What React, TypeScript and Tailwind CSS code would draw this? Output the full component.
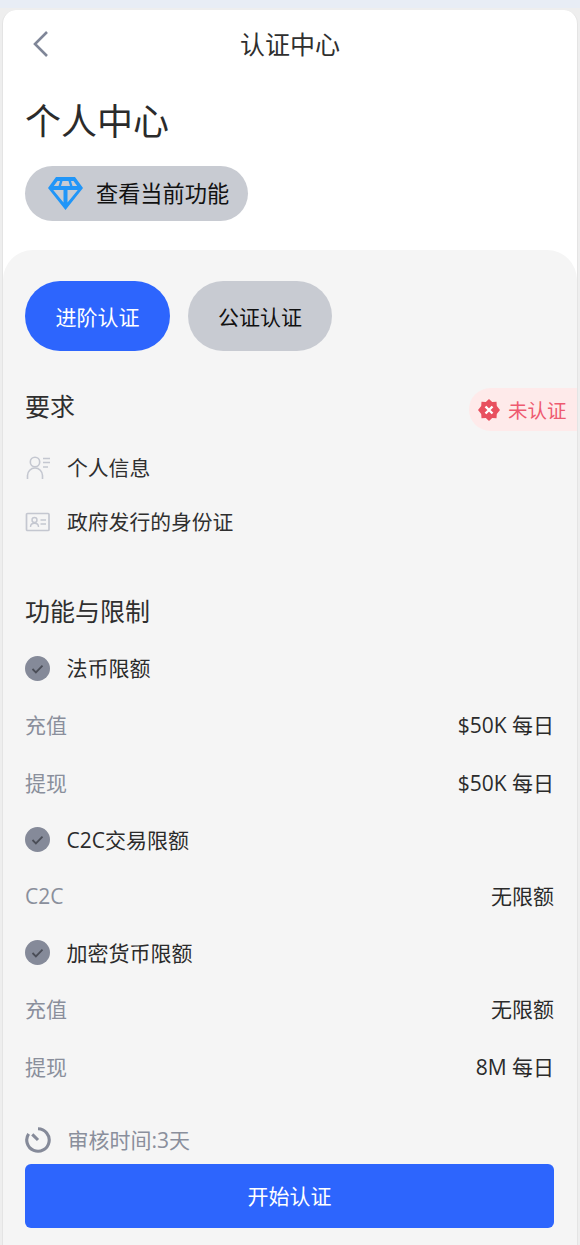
import React from "react";

const Row = ({ label, value }: { label: string; value: string }) => (
  <div className="flex h-[58px] items-center justify-between text-[21px]">
    <span className="pt-[2px] text-[#8a8f9c]">{label}</span>
    <span className="pt-[2px] text-[#2b2b2b]">{value}</span>
  </div>
);

const Check = () => (
  <svg width="25" height="25" viewBox="0 0 25 25" className="shrink-0">
    <circle cx="12.5" cy="12.5" r="12.5" fill="#858a99" />
    <path d="M7.5 13l3.4 3.4 6.6-6.8" fill="none" stroke="#4a4d57" strokeWidth="1.8" />
  </svg>
);

const CheckHead = ({ label, tight }: { label: string; tight?: boolean }) => (
  <div className={`flex items-center gap-[16.5px] text-[21px] text-[#2b2b2b] ${tight ? "h-[55px]" : "h-[56px]"}`}>
    <Check />
    <span className="pt-[2px]">{label}</span>
  </div>
);

export default function App() {
  return (
    <div
      className="h-[1245px] w-[580px] overflow-hidden bg-[#e8edf5] pt-[8px]"
      style={{ fontFamily: '"Open Sans", "Noto Sans CJK SC", sans-serif' }}
    >
      <div className="flex h-[1237px] flex-col bg-[#eeeeee] pl-[2px] pr-[2px] pt-[2px]">
        <div className="flex flex-1 flex-col rounded-t-[14px] border-x border-[#e4e4e4] bg-white">
          <div className="relative flex h-[68px] items-center justify-center pt-[1px] text-[25px] text-[#2f2f2f]">
            <svg width="18" height="28" viewBox="0 0 18 28" className="absolute left-[28px] top-[20px]">
              <path d="M16 2L4 14l12 12" fill="none" stroke="#7f8698" strokeWidth="2.6" />
            </svg>
            认证中心
          </div>
          <div className="px-[22px]">
            <h1 className="mt-[14px] h-[60px] text-[36px] font-normal leading-[60px] text-[#2b2b2b]">个人中心</h1>
            <div className="mt-[14px] flex h-[55px] w-[223px] items-center gap-[13px] rounded-full bg-[#c8cbd2] pl-[23px] text-[22.2px] text-[#111111]">
              <svg width="35" height="33" viewBox="0 0 35 33" className="shrink-0">
                <path
                  fillRule="evenodd"
                  d="M8 0H27L35 11L17.5 33L0 11ZM9.5 4H12L10.5 9H5.8ZM14.5 4H20.5L22 9H13ZM23 4H25.5L29.2 9H24.5ZM5.2 13H15.5V25.5ZM19.5 13H29.8L19.5 25.5Z"
                  fill="#2196f8"
                />
              </svg>
              <span>查看当前功能</span>
            </div>
          </div>
          <div className="mt-[29px] flex flex-1 flex-col rounded-t-[30px] bg-[#f5f5f5] pl-[22px] pr-[23px]">
            <div className="mt-[31px] flex gap-[18px] text-[21px]">
              <div className="flex h-[70px] w-[145px] items-center justify-center rounded-full bg-[#2d65fd] pt-[3px] text-white">进阶认证</div>
              <div className="flex h-[70px] w-[144px] items-center justify-center rounded-full bg-[#c8cbd2] pt-[3px] text-[#111111]">公证认证</div>
            </div>
            <div className="mt-[37px] -mr-[23px] flex h-[43px] items-center justify-between">
              <span className="-mt-[5px] text-[25px] text-[#2f2f2f]">要求</span>
              <div className="flex h-[43px] w-[108px] items-center gap-[8px] rounded-l-full bg-[#feeaea] pl-[9px] text-[19.5px] text-[#ee5a70]">
                <svg width="22" height="22" viewBox="0 0 22 22" className="shrink-0">
                  <path d="M11 0l3.2 3 4.3-.3.3 4.3L22 11l-3.2 4-.3 4.3-4.3-.3-3.2 3-3.2-3-4.3.3-.3-4.3L0 11l3.2-4 .3-4.3 4.3.3z" fill="#e8505f" />
                  <path d="M7.5 7.5l7 7M14.5 7.5l-7 7" stroke="#ffffff" strokeWidth="2.4" />
                </svg>
                <span className="pt-[2px]">未认证</span>
              </div>
            </div>
            <div className="mt-[10px] flex h-[54px] items-center gap-[16px] text-[20.8px] text-[#2f2f2f]">
              <svg width="26" height="26" viewBox="0 0 26 26" className="shrink-0">
                <circle cx="10" cy="7" r="4.7" fill="none" stroke="#c4c7d0" strokeWidth="1.6" />
                <path d="M2.5 24v-3.5a7.5 7.5 0 0115 0V24" fill="none" stroke="#c4c7d0" strokeWidth="1.6" />
                <path d="M18 3.5h7M18 7.5h7M18 12h5" stroke="#c4c7d0" strokeWidth="1.6" />
              </svg>
              <span className="pt-[2px]">个人信息</span>
            </div>
            <div className="flex h-[54px] items-center gap-[16px] text-[20.8px] text-[#2f2f2f]">
              <svg width="26" height="20" viewBox="0 0 26 20" className="shrink-0">
                <rect x="1.5" y="1.5" width="22.5" height="17" rx="1" fill="none" stroke="#c4c7d0" strokeWidth="1.7" />
                <circle cx="9.5" cy="8" r="2.5" fill="none" stroke="#c4c7d0" strokeWidth="1.4" />
                <path d="M5.5 15c0-5 8-5 8 0M15.5 8h5.5M15.5 12h5.5" fill="none" stroke="#c4c7d0" strokeWidth="1.4" />
              </svg>
              <span className="pt-[2px]">政府发行的身份证</span>
            </div>
            <div className="mt-[42px] flex h-[40px] items-center pt-[2px] text-[25px] text-[#2f2f2f]">功能与限制</div>
            <div className="mt-[9px]">
              <CheckHead label="法币限额" />
              <Row label="充值" value="$50K 每日" />
              <Row label="提现" value="$50K 每日" />
              <CheckHead label="C2C交易限额" tight />
              <Row label="C2C" value="无限额" />
              <CheckHead label="加密货币限额" tight />
              <Row label="充值" value="无限额" />
              <Row label="提现" value="8M 每日" />
            </div>
            <div className="mt-[29px] flex h-[30px] items-center gap-[16.5px] text-[21px] text-[#8a8f9c]">
              <svg width="26" height="26" viewBox="0 0 25 25" className="shrink-0">
                <path d="M12.5 1.7a10.8 10.8 0 11-9 4.8" fill="none" stroke="#858a99" strokeWidth="3" />
                <path d="M7 7l5.5 5.5" stroke="#858a99" strokeWidth="3" />
              </svg>
              <span className="pt-[2px]">审核时间:3天</span>
            </div>
            <div className="mt-[9px] flex h-[64px] items-center justify-center rounded-[6px] bg-[#2d65fd] pt-[2px] text-[21px] text-white">开始认证</div>
          </div>
        </div>
      </div>
    </div>
  );
}
